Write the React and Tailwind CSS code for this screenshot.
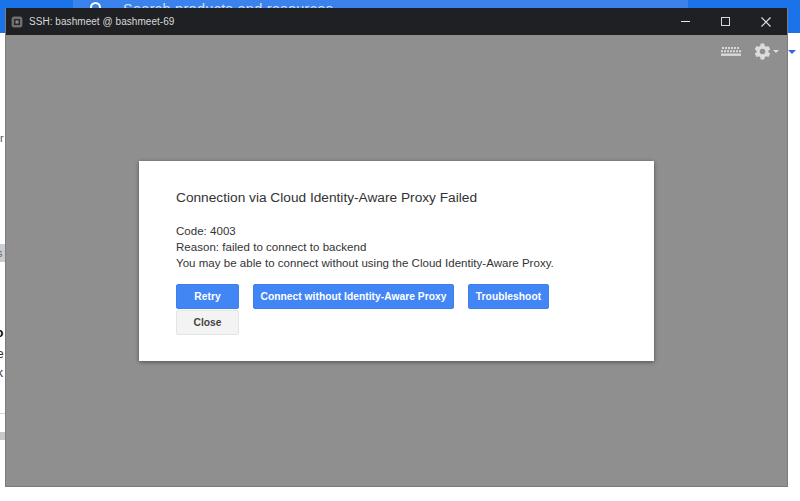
import React from "react";

const font = { fontFamily: '"Liberation Sans", Arial, sans-serif' };

function Btn({ children, primary, className = "" }) {
  return (
    <button
      className={
        "h-[25px] rounded-[2px] border text-[10.25px] font-bold tracking-[0.03px] text-center " +
        (primary
          ? "bg-[#4285f4] border-[#3f7fe8] text-white "
          : "bg-[#f3f3f3] border-[#e4e4e4] text-[#444444] ") +
        className
      }
    >
      {children}
    </button>
  );
}

export default function App() {
  return (
    <div className="relative w-[800px] h-[501px] overflow-hidden bg-white" style={font}>
      {/* page behind the window */}
      <div className="flex h-[33px] bg-[#1a73e8]">
        <div className="w-[73px]" />
        <div className="w-[615px] bg-[#3b82ec] flex items-start pl-[17px]">
          <div className="w-[11px] h-[11px] mt-[2px] rounded-full border-[2px] border-white" />
          <span className="ml-[22px] text-[14.5px] leading-[16px] text-[#cfe0fb] mt-[1px] tracking-[0.3px]">Search products and resources</span>
        </div>
      </div>
      <div className="absolute left-0 top-[128px] w-[5px] text-[11px] text-[#555] overflow-hidden leading-[20px]">r</div>
      <div className="absolute left-0 top-[244px] w-[5px] h-[18px] bg-[#c9cdd1] text-[11px] text-[#666] overflow-hidden leading-[18px]"><span className="-ml-[3px] inline-block">s</span></div>
      <div className="absolute left-0 top-[325px] w-[5px] text-[12px] font-bold text-black overflow-hidden leading-[16px]"><span className="-ml-[4px] inline-block">o</span></div>
      <div className="absolute left-0 top-[346px] w-[5px] text-[12px] text-[#333] overflow-hidden leading-[16px]"><span className="-ml-[3px] inline-block">e</span></div>
      <div className="absolute left-0 top-[365px] w-[5px] text-[12px] text-[#333] overflow-hidden leading-[16px]"><span className="-ml-[3px] inline-block">k</span></div>
      <div className="absolute left-0 top-[413px] w-[5px] h-px bg-[#d5d5d5]" />
      <div className="absolute left-0 top-[432px] w-[5px] h-[8px] bg-[#c8c8c8]" />
      <div className="absolute left-[788px] top-[50px] w-0 h-0 border-x-[4px] border-x-transparent border-t-[4px] border-t-[#3367d6]" />

      {/* SSH window */}
      <div className="absolute left-[5px] top-[8px] w-[783px] h-[479px] flex flex-col bg-[#8f8f8f] border-b border-x border-[#7c7c7c]">
        <div className="h-[27px] shrink-0 bg-[#1f2023] flex items-center text-[#d8d8d8]">
          <svg viewBox="0 0 12 12" className="w-[12px] h-[12px] ml-[5px]">
            <rect x="0.6" y="0.6" width="10.8" height="10.8" rx="2.5" fill="#6e6e6e" />
            <rect x="3" y="3" width="6" height="6" fill="#2a2a2c" />
            <rect x="4.5" y="4.5" width="3" height="3" fill="#8a8a8a" />
          </svg>
          <span className="ml-[6px] text-[10px] tracking-[0.05px] whitespace-nowrap">SSH: bashmeet @ bashmeet-69</span>
          <div className="ml-auto flex items-center mr-[1px]">
            <div className="w-[40px] flex justify-center"><div className="w-[9px] h-px bg-[#e8e8e8]" /></div>
            <div className="w-[40px] flex justify-center"><div className="w-[9px] h-[9px] border border-[#d8d8d8]" /></div>
            <div className="w-[40px] flex justify-center ml-[1px]">
              <svg viewBox="0 0 10 10" className="w-[10px] h-[10px]" fill="none" stroke="#e8e8e8" strokeWidth="1.1">
                <path d="M0.5 0.5 L9.5 9.5 M9.5 0.5 L0.5 9.5" />
              </svg>
            </div>
          </div>
        </div>

        <div className="relative flex-1 flex items-center justify-center">
          <div className="absolute right-[8px] top-[7px] flex items-center">
            <svg viewBox="0 0 20 10" className="w-[20px] h-[11px] mr-[12px]" fill="#d9d9d9">
              <rect x="1" y="0.5" width="2" height="2" /><rect x="4" y="0.5" width="2" height="2" /><rect x="7" y="0.5" width="2" height="2" /><rect x="10" y="0.5" width="2" height="2" /><rect x="13" y="0.5" width="2" height="2" /><rect x="16" y="0.5" width="2" height="2" />
              <rect x="0" y="3.7" width="2" height="2" /><rect x="3" y="3.7" width="2" height="2" /><rect x="6" y="3.7" width="2" height="2" /><rect x="9" y="3.7" width="2" height="2" /><rect x="12" y="3.7" width="2" height="2" /><rect x="15" y="3.7" width="2" height="2" /><rect x="18" y="3.7" width="2" height="2" />
              <rect x="0" y="7" width="20" height="2.4" />
            </svg>
            <svg viewBox="0 0 24 24" className="w-[19px] h-[19px]" fill="#dcdcdc">
              <path d="M19.4 13c.05-.33.08-.66.08-1s-.03-.67-.08-1l2.1-1.65c.2-.15.25-.42.12-.64l-2-3.46c-.12-.22-.39-.3-.61-.22l-2.49 1c-.52-.4-1.08-.73-1.69-.98l-.38-2.65A.49.49 0 0 0 14 2h-4c-.25 0-.46.18-.49.42l-.38 2.65c-.61.25-1.17.59-1.69.98l-2.49-1c-.23-.09-.49 0-.61.22l-2 3.46c-.13.22-.07.49.12.64L4.57 11c-.05.33-.08.67-.08 1s.03.67.08 1l-2.11 1.65c-.19.15-.24.42-.12.64l2 3.46c.12.22.39.3.61.22l2.49-1c.52.4 1.08.73 1.69.98l.38 2.65c.03.24.24.42.49.42h4c.25 0 .46-.18.49-.42l.38-2.65c.61-.25 1.17-.59 1.69-.98l2.49 1c.23.09.49 0 .61-.22l2-3.46c.12-.22.07-.49-.12-.64L19.4 13zM12 15.5a3.5 3.5 0 1 1 0-7 3.5 3.5 0 0 1 0 7z" />
            </svg>
            <div className="ml-[1px] w-0 h-0 border-x-[3px] border-x-transparent border-t-[3px] border-t-[#dcdcdc]" />
          </div>

          <div className="w-[515px] h-[200px] mt-[1px] bg-white shadow-[0_1px_4px_rgba(0,0,0,0.45)] pt-[29px] px-[37px] text-[#333333]">
            <h1 className="text-[13.7px] leading-[16px] font-normal whitespace-nowrap">Connection via Cloud Identity-Aware Proxy Failed</h1>
            <div className="mt-[17px] text-[11.5px] leading-[16px] tracking-[0.03px]">
              <div>Code: 4003</div>
              <div>Reason: failed to connect to backend</div>
              <div className="whitespace-nowrap">You may be able to connect without using the Cloud Identity-Aware Proxy.</div>
            </div>
            <div className="mt-[13px] flex flex-col items-start">
              <div className="flex gap-[14px]">
                <Btn primary className="w-[63px]">Retry</Btn>
                <Btn primary className="w-[201px] whitespace-nowrap">Connect without Identity-Aware Proxy</Btn>
                <Btn primary className="w-[81px]">Troubleshoot</Btn>
              </div>
              <Btn className="w-[63px] mt-px">Close</Btn>
            </div>
          </div>
        </div>
      </div>
    </div>
  );
}
